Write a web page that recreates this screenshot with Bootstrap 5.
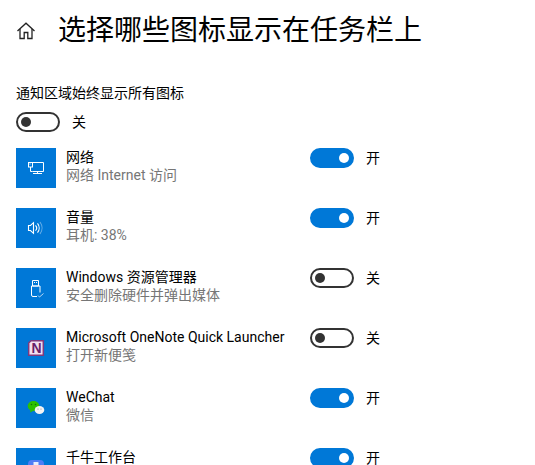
<!DOCTYPE html>
<html lang="zh-CN">
<head>
<meta charset="UTF-8">
<title>选择哪些图标显示在任务栏上</title>
<meta name="viewport" content="width=device-width, initial-scale=1">
<link href="https://cdn.jsdelivr.net/npm/bootstrap@5.3.3/dist/css/bootstrap.min.css" rel="stylesheet">
<style>
  html, body { height: 465px; overflow: hidden; }
  body {
    background: #fff;
    color: #000;
    font-family: Roboto, "Noto Sans CJK SC", sans-serif;
    font-size: 14px;
    line-height: 18px;
  }
  .page-head { height: 62px; padding-left: 16px; }
  .home-icon { width: 20px; margin-right: 22px; }
  .page-title { font-size: 28px; line-height: 38px; font-weight: 400; margin: 0; white-space: nowrap; }
  .all-label { margin-top: 21px; line-height: 20px; padding-left: 16px; }
  .all-toggle { margin-top: 9px; padding-left: 16px; height: 20px; }
  .tray-list { margin-top: 16px; padding-left: 16px; }
  .tray-row { height: 60px; }
  .tray-icon { width: 40px; height: 40px; background: #0078d7; flex: none; }
  .tray-icon svg { display: block; }
  .tray-text { width: 254px; padding-left: 10px; flex: none; white-space: nowrap; }
  .tray-sub { color: #767676; }
  .form-switch.tray-switch { padding: 0; margin: 0; min-height: 20px; height: 20px; }
  .form-switch.tray-switch .form-check-input {
    width: 44px;
    height: 20px;
    margin: 0;
    display: block;
    float: none;
    border: 2px solid #333;
    border-radius: 10px;
    background-color: #fff;
    background-size: 10px 10px;
    background-position: left 3px center;
    background-image: url("data:image/svg+xml,%3csvg xmlns='http://www.w3.org/2000/svg' viewBox='0 0 10 10'%3e%3ccircle cx='5' cy='5' r='5' fill='%23333'/%3e%3c/svg%3e");
    box-shadow: none;
  }
  .form-switch.tray-switch .form-check-input:checked {
    border-color: #0078d7;
    background-color: #0078d7;
    background-position: right 3px center;
    background-image: url("data:image/svg+xml,%3csvg xmlns='http://www.w3.org/2000/svg' viewBox='0 0 10 10'%3e%3ccircle cx='5' cy='5' r='5' fill='%23fff'/%3e%3c/svg%3e");
  }
  .switch-label { margin-left: 12px; line-height: 20px; }
</style>
</head>
<body>

<div class="page-head d-flex align-items-center">
  <svg class="home-icon" height="20" viewBox="0 0 20 20" fill="none" stroke="#222" stroke-width="1.3">
    <path d="M1.5 10 10 2.2 18.5 10"/>
    <path d="M4 8v9.5h4.2v-6h3.6v6H16V8"/>
  </svg>
  <h1 class="page-title">选择哪些图标显示在任务栏上</h1>
</div>

<div class="all-label">通知区域始终显示所有图标</div>
<div class="all-toggle d-flex">
  <div class="form-check form-switch tray-switch"><input class="form-check-input" type="checkbox" role="switch"></div>
  <span class="switch-label">关</span>
</div>

<div class="tray-list">

  <div class="tray-row d-flex align-items-start">
    <div class="tray-icon">
      <svg width="40" height="40" viewBox="0 0 40 40" fill="none" stroke="#fff" stroke-width="1">
        <path d="M16.500 14.500h11v9h-11"/>
        <rect x="12.500" y="14.500" width="4" height="4.500" fill="#0078d7"/>
        <rect x="13.500" y="15.500" width="1" height="1" fill="#fff" stroke="none"/>
        <path d="M14.500 19v4.500h2M21.500 23.500v2M17 25.500h9"/>
      </svg>
    </div>
    <div class="tray-text">
      <div>网络</div>
      <div class="tray-sub">网络 Internet 访问</div>
    </div>
    <div class="form-check form-switch tray-switch"><input class="form-check-input" type="checkbox" role="switch" checked></div>
    <span class="switch-label">开</span>
  </div>

  <div class="tray-row d-flex align-items-start">
    <div class="tray-icon">
      <svg width="40" height="40" viewBox="0 0 40 40" fill="none" stroke="#fff" stroke-width="1.100">
        <path d="M12.500 17.500h2l3-2.800v10.600l-3-2.800h-2z"/>
        <path d="M19.500 17.300a4 4 0 0 1 0 5.400"/>
        <path d="M21.500 15.300a7.500 7.500 0 0 1 0 9.400"/>
        <path d="M24 14a10 10 0 0 1 0 12" stroke-opacity=".4"/>
      </svg>
    </div>
    <div class="tray-text">
      <div>音量</div>
      <div class="tray-sub">耳机: 38%</div>
    </div>
    <div class="form-check form-switch tray-switch"><input class="form-check-input" type="checkbox" role="switch" checked></div>
    <span class="switch-label">开</span>
  </div>

  <div class="tray-row d-flex align-items-start">
    <div class="tray-icon">
      <svg width="40" height="40" viewBox="0 0 40 40" fill="none" stroke="#fff" stroke-width="1">
        <path d="M16.500 12.500h6v5.500h-6z"/>
        <path d="M18 14.500h1M20 14.500h1"/>
        <path d="M15.500 18h8.500v6.500M15.500 18v9a1.500 1.500 0 0 0 1.500 1.500h4"/>
        <path d="M22 27.500l1.500 1.500 4-3.500" stroke="#b9d7f1"/>
      </svg>
    </div>
    <div class="tray-text">
      <div>Windows 资源管理器</div>
      <div class="tray-sub">安全删除硬件并弹出媒体</div>
    </div>
    <div class="form-check form-switch tray-switch"><input class="form-check-input" type="checkbox" role="switch"></div>
    <span class="switch-label">关</span>
  </div>

  <div class="tray-row d-flex align-items-start">
    <div class="tray-icon">
      <svg width="40" height="40" viewBox="0 0 40 40">
        <path d="M15 12.700h12.300v14.600H12.700V15z" fill="#f3dff0" stroke="#80397b" stroke-width="1.500"/>
        <text x="20.500" y="25" text-anchor="middle" font-family="Liberation Sans, sans-serif" font-weight="700" font-size="14" fill="#6a1f6a">N</text>
      </svg>
    </div>
    <div class="tray-text">
      <div>Microsoft OneNote Quick Launcher</div>
      <div class="tray-sub">打开新便笺</div>
    </div>
    <div class="form-check form-switch tray-switch"><input class="form-check-input" type="checkbox" role="switch"></div>
    <span class="switch-label">关</span>
  </div>

  <div class="tray-row d-flex align-items-start">
    <div class="tray-icon">
      <svg width="40" height="40" viewBox="0 0 40 40">
        <ellipse cx="17.500" cy="18" rx="5.800" ry="5" fill="#2dc100"/>
        <path d="M14.500 21.500l-.5 3 3-1.500z" fill="#2dc100"/>
        <circle cx="15.500" cy="16.500" r=".8" fill="#12710a"/>
        <circle cx="19.500" cy="16.500" r=".8" fill="#12710a"/>
        <ellipse cx="23.500" cy="22" rx="4.800" ry="4" fill="#f4f4f4"/>
        <circle cx="22" cy="21" r=".6" fill="#888"/>
        <circle cx="25" cy="21" r=".6" fill="#888"/>
      </svg>
    </div>
    <div class="tray-text">
      <div>WeChat</div>
      <div class="tray-sub">微信</div>
    </div>
    <div class="form-check form-switch tray-switch"><input class="form-check-input" type="checkbox" role="switch" checked></div>
    <span class="switch-label">开</span>
  </div>

  <div class="tray-row d-flex align-items-start">
    <div class="tray-icon">
      <svg width="40" height="40" viewBox="0 0 40 40">
        <rect x="12" y="12" width="16" height="16" rx="4" fill="#4f7df5"/>
        <rect x="17.500" y="14" width="5" height="4" fill="#e8eefc"/>
      </svg>
    </div>
    <div class="tray-text">
      <div>千牛工作台</div>
    </div>
    <div class="form-check form-switch tray-switch"><input class="form-check-input" type="checkbox" role="switch" checked></div>
    <span class="switch-label">开</span>
  </div>

</div>

<script src="https://cdn.jsdelivr.net/npm/bootstrap@5.3.3/dist/js/bootstrap.bundle.min.js"></script>
</body>
</html>
